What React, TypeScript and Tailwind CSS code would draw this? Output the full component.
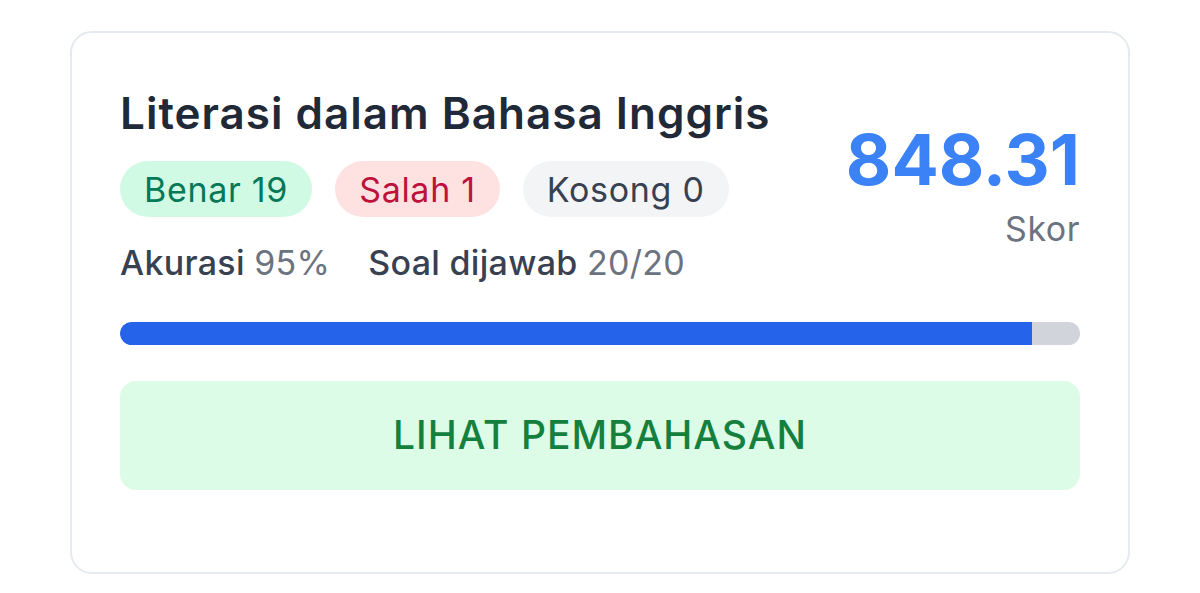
export default function App() {
  return (
    <div className="w-[1200px] h-[593px] bg-white pt-[31px] pl-[70px]" style={{ fontFamily: "Inter, 'Noto Sans', sans-serif" }}>
      <div className="w-[1060px] h-[543px] border-2 border-[#e5e9f0] rounded-[22px] bg-white px-[48px] pt-[54px]">
        <div className="flex justify-between">
          <div>
            <h1 className="text-[44px] leading-[53px] font-semibold text-[#1f2937] tracking-[1px]">
              Literasi dalam Bahasa Inggris
            </h1>
            <div className="flex gap-[23px] mt-[21px] text-[34px] tracking-[0.7px]">
              <span className="h-[56px] px-[24px] rounded-full bg-[#d1fae5] text-[#047857] flex items-center">Benar 19</span>
              <span className="h-[56px] px-[24px] rounded-full bg-[#fee2e2] text-[#be123c] flex items-center">Salah 1</span>
              <span className="h-[56px] px-[24px] rounded-full bg-[#f3f4f6] text-[#374151] flex items-center">Kosong 0</span>
            </div>
            <div className="flex gap-[38px] mt-[26px] text-[34px] leading-[40px] tracking-[0.3px]">
              <span className="text-[#374151] font-medium">Akurasi <span className="text-[#6b7280] font-normal">95%</span></span>
              <span className="text-[#374151] font-medium">Soal dijawab <span className="text-[#6b7280] font-normal">20/20</span></span>
            </div>
          </div>
          <div className="flex flex-col items-end pt-[38px]">
            <div className="text-[70px] leading-[70px] font-bold text-[#3b82f6]">848.31</div>
            <div className="text-[34px] leading-[40px] tracking-[0.5px] text-[#6b7280] mt-[14px]">Skor</div>
          </div>
        </div>
        <div className="mt-[39px] h-[23px] rounded-full bg-[#d1d5db] overflow-hidden">
          <div className="h-full bg-[#2563eb] rounded-l-full" style={{ width: "95%" }} />
        </div>
        <button className="mt-[36px] w-full h-[109px] rounded-[16px] bg-[#dcfce7] text-[#15803d] text-[39px] tracking-[1px] font-medium flex items-center justify-center">
          LIHAT PEMBAHASAN
        </button>
      </div>
    </div>
  );
}
